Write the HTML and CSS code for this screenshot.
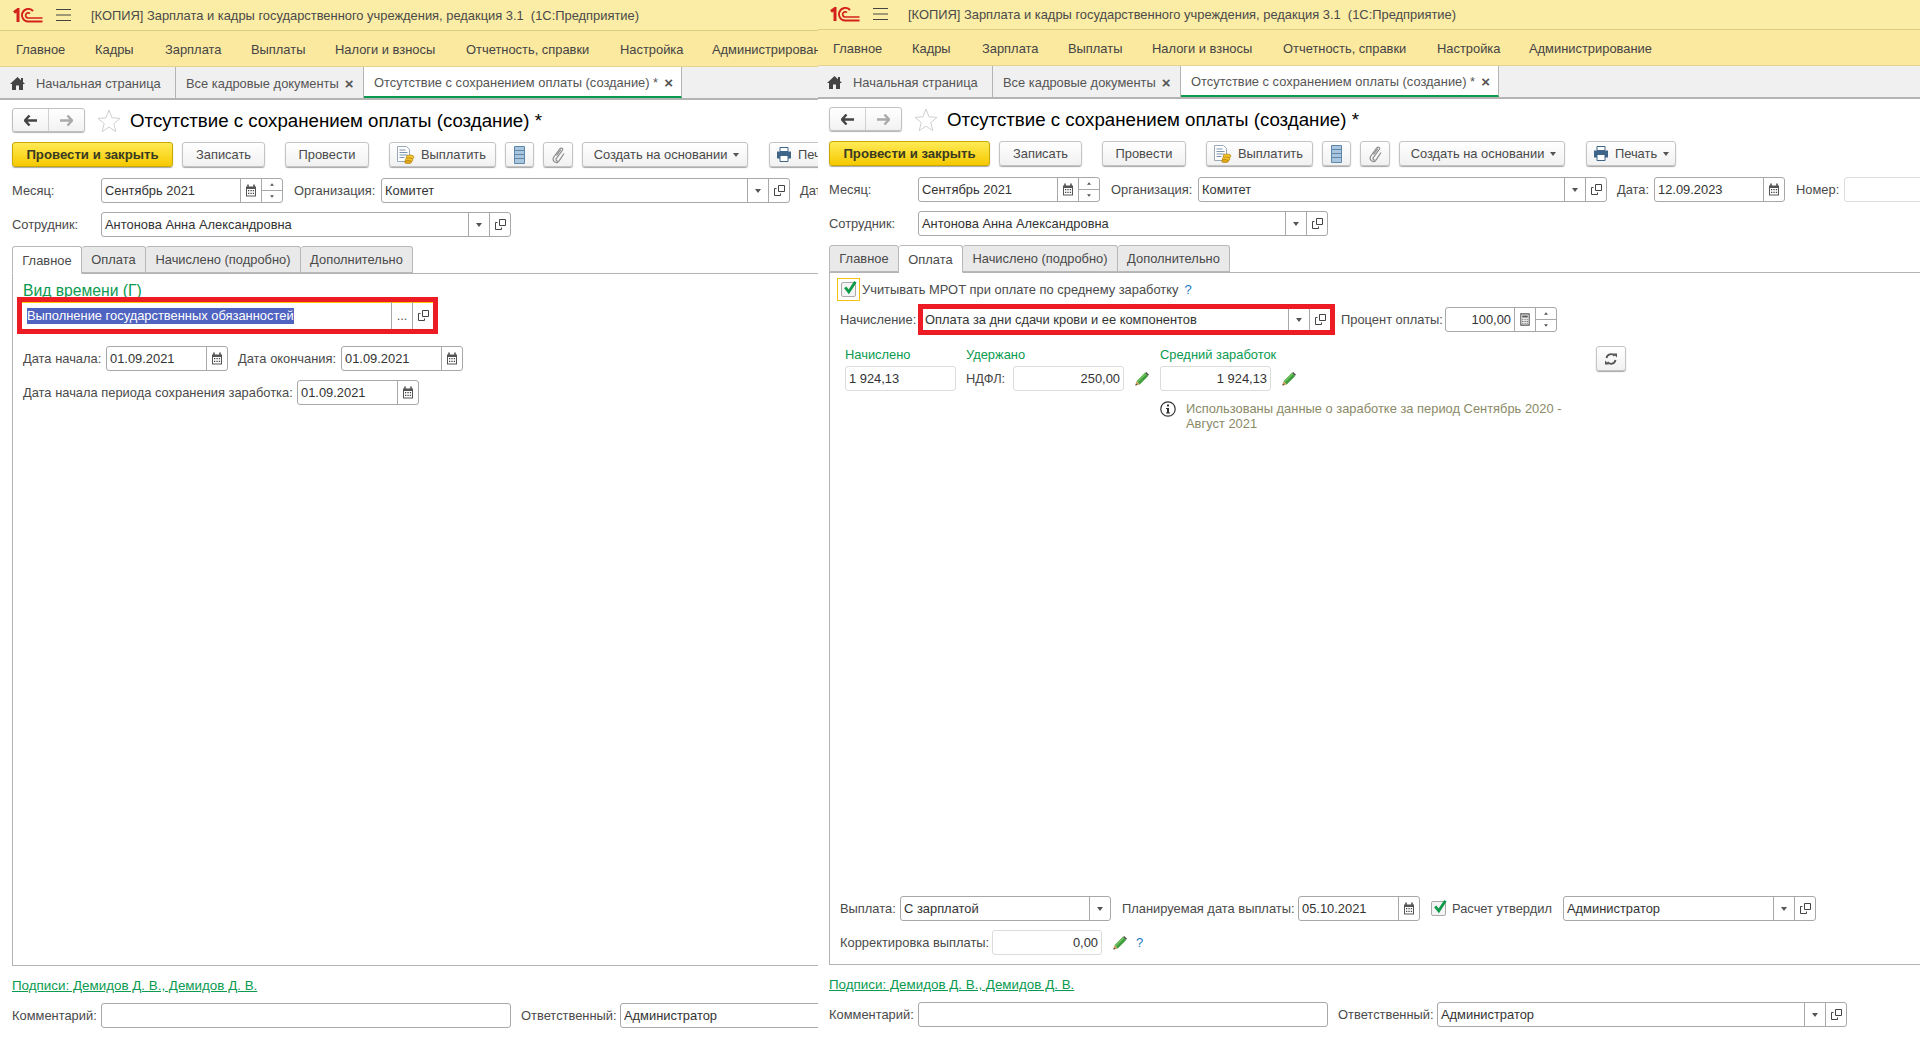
FILE: index.html
```html
<!DOCTYPE html>
<html lang="ru">
<head>
    <meta charset="UTF-8">
    <title>Отсутствие с сохранением оплаты</title>
    <link rel="stylesheet" href="styles.css">
</head>
<body>
    <svg class="defs" width="0" height="0">
        <symbol id="i-cal" viewBox="0 0 12 13"><path d="M1 2.5h10v10H1z" fill="#555"/><path d="M3 0.5v3M9 0.5v3" stroke="#555" stroke-width="1.6"/><path d="M2 5h8v6.5H2z" fill="#fff"/><path d="M3 6h1.3v1.2H3zM5.4 6h1.3v1.2H5.4zM7.8 6h1.3v1.2H7.8zM3 8.8h1.3V10H3zM5.4 8.8h1.3V10H5.4zM7.8 8.8h1.3V10H7.8z" fill="#444"/></symbol>
        <symbol id="i-calc" viewBox="0 0 12 14"><path d="M1.5 1h9v12h-9z" fill="none" stroke="#555" stroke-width="1.2"/><path d="M3 2.6h6v2.2H3zM3 6.2h1.3v1.2H3zM5.4 6.2h1.3v1.2H5.4zM7.7 6.2H9v1.2H7.7zM3 8.4h1.3v1.2H3zM5.4 8.4h1.3v1.2H5.4zM7.7 8.4H9v1.2H7.7zM3 10.5h1.3v1.2H3zM5.4 10.5h1.3v1.2H5.4zM7.7 10.5H9v1.2H7.7z" fill="#555"/></symbol>
        <symbol id="i-open" viewBox="0 0 11 11"><path d="M4.5 0.5h6v6h-6z" fill="none" stroke="#444"/><path d="M2.5 3.5h-2v7h6v-2" fill="none" stroke="#444"/></symbol>
        <symbol id="i-drop" viewBox="0 0 6 4"><path d="M0 0h6L3 4z" fill="#555"/></symbol>
        <symbol id="i-pencil" viewBox="0 0 14 14"><path d="M10 0.8l3.2 3.2-8.4 8.4-3.2-3.2z" fill="#3f9d3f"/><path d="M10 0.8l1.4 1.4-8.4 8.4-1.4-1.4z" fill="#6cc05c"/><path d="M11.2 0l2.8 2.8-1 1-2.8-2.8z" fill="#4a4a4a"/><path d="M1.6 9.2l3.2 3.2L0.4 13.6z" fill="#c99a55"/><path d="M0.9 11.6l1.5 1.5-2 .5z" fill="#444"/></symbol>
        <symbol id="i-check" viewBox="0 0 15 15"><path d="M3.2 6.4l3.6 4.4L13.4 0.8" fill="none" stroke="#0f9a4a" stroke-width="2.8"/></symbol>
        <symbol id="i-logo" viewBox="0 0 30 15"><path d="M1 4.500L5 1.500V14" fill="none" stroke="#d3211c" stroke-width="3"/><path d="M20 3A6.300 6.300 0 1 0 15 13.500H29.500" fill="none" stroke="#d3211c" stroke-width="1.900"/><path d="M17 5.500A2.600 2.600 0 1 0 15 10H29.500" fill="none" stroke="#d3211c" stroke-width="1.700"/></symbol>
    </svg>

    <div class="win win-left">
        <div class="win-inner">
            <div class="title-bar">
                <svg class="logo" width="30" height="15" viewBox="0 0 30 15"><use href="#i-logo"/></svg>
                <svg class="burger" width="15" height="12" viewBox="0 0 15 12"><path d="M0 0.5h15M0 6h15M0 11.5h15" stroke="#444"/></svg>
                <span class="title-text">[КОПИЯ] Зарплата и кадры государственного учреждения, редакция 3.1&nbsp; (1С:Предприятие)</span>
            </div>
            <div class="menu">
                <a class="m1">Главное</a><a class="m2">Кадры</a><a class="m3">Зарплата</a><a class="m4">Выплаты</a><a class="m5">Налоги и взносы</a><a class="m6">Отчетность, справки</a><a class="m7">Настройка</a><a>Администрирование</a>
            </div>
            <div class="open-tabs">
                <div class="otab otab-home"><svg width="15" height="13" viewBox="0 0 15 13"><path d="M7.5 0L0 7h2v6h4V8.5h3V13h4V7h2l-2-1.9V1h-2v2.2z" fill="#444"/></svg>Начальная страница</div>
                <div class="otab otab-all">Все кадровые документы<span class="x">×</span></div>
                <div class="otab otab-cur">Отсутствие с сохранением оплаты (создание) *<span class="x">×</span></div>
            </div>
            <div class="form">
                <div class="head">
                    <div class="nav"><span class="nav-b"><svg width="13" height="11" viewBox="0 0 13 11"><path d="M5.5 0.5L1 5.5l4.5 5M1.5 5.5H13" fill="none" stroke="#444" stroke-width="2.4"/></svg></span><span class="nav-b"><svg width="13" height="11" viewBox="0 0 13 11"><path d="M7.5 0.5L12 5.5l-4.5 5M11.5 5.5H0" fill="none" stroke="#aaa" stroke-width="2.4"/></svg></span></div>
                    <svg class="star" width="24" height="23" viewBox="0 0 24 23"><path d="M12 1l3 7.8 8 .6-6.2 5.2 2 8-6.8-4.4-6.8 4.4 2-8L1 9.400l8-.6z" fill="#fff" stroke="#cfcfcf"/></svg>
                    <h1>Отсутствие с сохранением оплаты (создание) *</h1>
                </div>
                <div class="toolbar">
                    <button class="btn btn-main">Провести и закрыть</button>
                    <button class="btn b-save">Записать</button>
                    <button class="btn b-post">Провести</button>
                    <button class="btn b-pay"><svg width="19" height="18" viewBox="0 0 19 18"><path d="M1.500 0.500h9l3 3v12h-12z" fill="#fff" stroke="#9aa8b8"/><path d="M3.500 4h6M3.500 6.500h8M3.500 9h8M3.500 11.500h5" stroke="#7d93ad"/><ellipse cx="14" cy="11" rx="4" ry="2" fill="#f3c22c" stroke="#a8780c" stroke-width=".6"/><ellipse cx="13" cy="14" rx="4" ry="2" fill="#f3c22c" stroke="#a8780c" stroke-width=".6"/><ellipse cx="12" cy="16" rx="3.500" ry="1.600" fill="#e0a818" stroke="#a8780c" stroke-width=".6"/></svg>Выплатить</button>
                    <button class="btn b-list"><svg width="11" height="18" viewBox="0 0 11 18"><path d="M0.500 0.500h10v17h-10z" fill="#a9c6de" stroke="#5d88ab"/><path d="M1 4.500h9M1 8.500h9M1 12.500h9" stroke="#5d88ab"/></svg></button>
                    <button class="btn b-clip"><svg width="14" height="18" viewBox="0 0 14 18"><path d="M12 3.500L5 13a2 2 0 0 0 3 2l5-7.500M9 2.500l-6.500 9a3.500 3.500 0 0 0 5 4.500M9 2.500a2 2 0 0 1 3 1M5.500 9.500L10 3.500" fill="none" stroke="#8a8a8a" stroke-width="1.200"/></svg></button>
                    <button class="btn b-base">Создать на основании<svg class="dr" width="6" height="4"><use href="#i-drop"/></svg></button>
                    <button class="btn b-print"><svg width="16" height="15" viewBox="0 0 16 15"><path d="M4 0.500h8v4H4z" fill="#fff" stroke="#3e6588"/><path d="M1 4.500h14v7H1z" fill="#3e6588"/><path d="M4 8.500h8v6H4z" fill="#fff" stroke="#3e6588"/></svg>Печать<svg class="dr" width="6" height="4"><use href="#i-drop"/></svg></button>
                </div>
                <div class="row row-top">
                    <span class="lbl l-main">Месяц:</span>
                    <div class="field f-month"><span class="val">Сентябрь 2021</span><span class="fb"><svg class="i12" viewBox="0 0 12 13"><use href="#i-cal"/></svg></span><span class="fb spin"><i><svg width="4" height="3"><use href="#i-drop"/></svg></i><i><svg width="4" height="3"><use href="#i-drop"/></svg></i></span></div>
                    <span class="lbl l-org">Организация:</span>
                    <div class="field f-org"><span class="val">Комитет</span><span class="fb"><svg width="6" height="4"><use href="#i-drop"/></svg></span><span class="fb"><svg class="i11" viewBox="0 0 11 11"><use href="#i-open"/></svg></span></div>
                    <span class="lbl l-date">Дата:</span>
                </div>
                <div class="row row-top2">
                    <span class="lbl l-main">Сотрудник:</span>
                    <div class="field f-emp"><span class="val">Антонова Анна Александровна</span><span class="fb"><svg width="6" height="4"><use href="#i-drop"/></svg></span><span class="fb"><svg class="i11" viewBox="0 0 11 11"><use href="#i-open"/></svg></span></div>
                </div>
                <div class="page-tabs">
                    <span class="ptab pt1 active">Главное</span><span class="ptab pt2">Оплата</span><span class="ptab pt3">Начислено (подробно)</span><span class="ptab pt4">Дополнительно</span>
                </div>
                <div class="panel">
                    <div class="kind-title">Вид времени (Г)</div>
                    <div class="red-frame frame-kind">
                        <div class="frame-val"><span class="sel">Выполнение государственных обязанностей</span></div>
                        <span class="fb fb-frame">...</span>
                        <span class="fb fb-frame"><svg class="i11" viewBox="0 0 11 11"><use href="#i-open"/></svg></span>
                    </div>
                    <div class="row row-in row-d1">
                        <span class="lbl l-ds">Дата начала:</span>
                        <div class="field f-d"><span class="val">01.09.2021</span><span class="fb"><svg class="i12" viewBox="0 0 12 13"><use href="#i-cal"/></svg></span></div>
                        <span class="lbl l-de">Дата окончания:</span>
                        <div class="field f-d"><span class="val">01.09.2021</span><span class="fb"><svg class="i12" viewBox="0 0 12 13"><use href="#i-cal"/></svg></span></div>
                    </div>
                    <div class="row row-in row-d2">
                        <span class="lbl l-dp">Дата начала периода сохранения заработка:</span>
                        <div class="field f-d"><span class="val">01.09.2021</span><span class="fb"><svg class="i12" viewBox="0 0 12 13"><use href="#i-cal"/></svg></span></div>
                    </div>
                </div>
                <div class="foot">
                    <a class="signs">Подписи: Демидов Д. В., Демидов Д. В.</a>
                    <div class="row">
                        <span class="lbl l-main">Комментарий:</span>
                        <div class="field f-emp"></div>
                        <span class="lbl l-resp">Ответственный:</span>
                        <div class="field f-resp"><span class="val">Администратор</span><span class="fb"><svg width="6" height="4"><use href="#i-drop"/></svg></span><span class="fb"><svg class="i11" viewBox="0 0 11 11"><use href="#i-open"/></svg></span></div>
                    </div>
                </div>
            </div>
        </div>
    </div>

    <div class="win win-right">
        <div class="win-inner">
            <div class="title-bar">
                <svg class="logo" width="30" height="15" viewBox="0 0 30 15"><use href="#i-logo"/></svg>
                <svg class="burger" width="15" height="12" viewBox="0 0 15 12"><path d="M0 0.5h15M0 6h15M0 11.5h15" stroke="#444"/></svg>
                <span class="title-text">[КОПИЯ] Зарплата и кадры государственного учреждения, редакция 3.1&nbsp; (1С:Предприятие)</span>
            </div>
            <div class="menu">
                <a class="m1">Главное</a><a class="m2">Кадры</a><a class="m3">Зарплата</a><a class="m4">Выплаты</a><a class="m5">Налоги и взносы</a><a class="m6">Отчетность, справки</a><a class="m7">Настройка</a><a>Администрирование</a>
            </div>
            <div class="open-tabs">
                <div class="otab otab-home"><svg width="15" height="13" viewBox="0 0 15 13"><path d="M7.5 0L0 7h2v6h4V8.5h3V13h4V7h2l-2-1.9V1h-2v2.2z" fill="#444"/></svg>Начальная страница</div>
                <div class="otab otab-all">Все кадровые документы<span class="x">×</span></div>
                <div class="otab otab-cur">Отсутствие с сохранением оплаты (создание) *<span class="x">×</span></div>
            </div>
            <div class="form">
                <div class="head">
                    <div class="nav"><span class="nav-b"><svg width="13" height="11" viewBox="0 0 13 11"><path d="M5.5 0.5L1 5.5l4.5 5M1.5 5.5H13" fill="none" stroke="#444" stroke-width="2.4"/></svg></span><span class="nav-b"><svg width="13" height="11" viewBox="0 0 13 11"><path d="M7.5 0.5L12 5.5l-4.5 5M11.5 5.5H0" fill="none" stroke="#aaa" stroke-width="2.4"/></svg></span></div>
                    <svg class="star" width="24" height="23" viewBox="0 0 24 23"><path d="M12 1l3 7.8 8 .6-6.2 5.2 2 8-6.8-4.4-6.8 4.4 2-8L1 9.400l8-.6z" fill="#fff" stroke="#cfcfcf"/></svg>
                    <h1>Отсутствие с сохранением оплаты (создание) *</h1>
                </div>
                <div class="toolbar">
                    <button class="btn btn-main">Провести и закрыть</button>
                    <button class="btn b-save">Записать</button>
                    <button class="btn b-post">Провести</button>
                    <button class="btn b-pay"><svg width="19" height="18" viewBox="0 0 19 18"><path d="M1.500 0.500h9l3 3v12h-12z" fill="#fff" stroke="#9aa8b8"/><path d="M3.500 4h6M3.500 6.500h8M3.500 9h8M3.500 11.500h5" stroke="#7d93ad"/><ellipse cx="14" cy="11" rx="4" ry="2" fill="#f3c22c" stroke="#a8780c" stroke-width=".6"/><ellipse cx="13" cy="14" rx="4" ry="2" fill="#f3c22c" stroke="#a8780c" stroke-width=".6"/><ellipse cx="12" cy="16" rx="3.500" ry="1.600" fill="#e0a818" stroke="#a8780c" stroke-width=".6"/></svg>Выплатить</button>
                    <button class="btn b-list"><svg width="11" height="18" viewBox="0 0 11 18"><path d="M0.500 0.500h10v17h-10z" fill="#a9c6de" stroke="#5d88ab"/><path d="M1 4.500h9M1 8.500h9M1 12.500h9" stroke="#5d88ab"/></svg></button>
                    <button class="btn b-clip"><svg width="14" height="18" viewBox="0 0 14 18"><path d="M12 3.500L5 13a2 2 0 0 0 3 2l5-7.500M9 2.500l-6.500 9a3.500 3.500 0 0 0 5 4.500M9 2.500a2 2 0 0 1 3 1M5.500 9.500L10 3.500" fill="none" stroke="#8a8a8a" stroke-width="1.200"/></svg></button>
                    <button class="btn b-base">Создать на основании<svg class="dr" width="6" height="4"><use href="#i-drop"/></svg></button>
                    <button class="btn b-print"><svg width="16" height="15" viewBox="0 0 16 15"><path d="M4 0.500h8v4H4z" fill="#fff" stroke="#3e6588"/><path d="M1 4.500h14v7H1z" fill="#3e6588"/><path d="M4 8.500h8v6H4z" fill="#fff" stroke="#3e6588"/></svg>Печать<svg class="dr" width="6" height="4"><use href="#i-drop"/></svg></button>
                </div>
                <div class="row row-top">
                    <span class="lbl l-main">Месяц:</span>
                    <div class="field f-month"><span class="val">Сентябрь 2021</span><span class="fb"><svg class="i12" viewBox="0 0 12 13"><use href="#i-cal"/></svg></span><span class="fb spin"><i><svg width="4" height="3"><use href="#i-drop"/></svg></i><i><svg width="4" height="3"><use href="#i-drop"/></svg></i></span></div>
                    <span class="lbl l-org">Организация:</span>
                    <div class="field f-org"><span class="val">Комитет</span><span class="fb"><svg width="6" height="4"><use href="#i-drop"/></svg></span><span class="fb"><svg class="i11" viewBox="0 0 11 11"><use href="#i-open"/></svg></span></div>
                    <span class="lbl l-date">Дата:</span>
                    <div class="field f-date"><span class="val">12.09.2023</span><span class="fb"><svg class="i12" viewBox="0 0 12 13"><use href="#i-cal"/></svg></span></div>
                    <span class="lbl l-num">Номер:</span>
                    <div class="field field-ro f-num"></div>
                </div>
                <div class="row row-top2">
                    <span class="lbl l-main">Сотрудник:</span>
                    <div class="field f-emp"><span class="val">Антонова Анна Александровна</span><span class="fb"><svg width="6" height="4"><use href="#i-drop"/></svg></span><span class="fb"><svg class="i11" viewBox="0 0 11 11"><use href="#i-open"/></svg></span></div>
                </div>
                <div class="page-tabs">
                    <span class="ptab pt1">Главное</span><span class="ptab pt2 active">Оплата</span><span class="ptab pt3">Начислено (подробно)</span><span class="ptab pt4">Дополнительно</span>
                </div>
                <div class="panel panel-pay">
                    <div class="pay-top">
                        <div class="check-row">
                            <span class="focus-box"><span class="check"><svg width="15" height="15" viewBox="0 0 15 15"><use href="#i-check"/></svg></span></span>
                            <span class="lbl">Учитывать МРОТ при оплате по среднему заработку</span>
                            <span class="hint hint-mrot">?</span>
                        </div>
                        <div class="row row-accr">
                            <span class="lbl l-accr">Начисление:</span>
                            <div class="red-frame frame-accr">
                                <div class="frame-val">Оплата за дни сдачи крови и ее компонентов</div>
                                <span class="fb fb-frame"><svg width="6" height="4"><use href="#i-drop"/></svg></span>
                                <span class="fb fb-frame"><svg class="i11" viewBox="0 0 11 11"><use href="#i-open"/></svg></span>
                            </div>
                            <span class="lbl l-pct">Процент оплаты:</span>
                            <div class="field f-pct"><span class="val num">100,00</span><span class="fb"><svg class="i12" viewBox="0 0 12 14"><use href="#i-calc"/></svg></span><span class="fb spin"><i><svg width="4" height="3"><use href="#i-drop"/></svg></i><i><svg width="4" height="3"><use href="#i-drop"/></svg></i></span></div>
                        </div>
                        <div class="amounts">
                            <div class="amt amt-acc">
                                <div class="amt-head">Начислено</div>
                                <div class="field field-ro f-amt"><span class="val">1 924,13</span></div>
                            </div>
                            <div class="amt amt-held">
                                <div class="amt-head">Удержано</div>
                                <div class="amt-line">
                                    <span class="lbl l-ndfl">НДФЛ:</span>
                                    <div class="field field-ro f-amt"><span class="val num">250,00</span></div>
                                    <svg class="pencil" width="14" height="14" viewBox="0 0 14 14"><use href="#i-pencil"/></svg>
                                </div>
                            </div>
                            <div class="amt amt-avg">
                                <div class="amt-head">Средний заработок</div>
                                <div class="amt-line">
                                    <div class="field field-ro f-amt"><span class="val num">1 924,13</span></div>
                                    <svg class="pencil" width="14" height="14" viewBox="0 0 14 14"><use href="#i-pencil"/></svg>
                                </div>
                                <div class="note">
                                    <svg width="16" height="16" viewBox="0 0 16 16"><circle cx="8" cy="8" r="7.200" fill="#fff" stroke="#333" stroke-width="1.200"/><path d="M7 3.500h2v2H7zM6 7h3v4.500h1V12.500H6v-1h1V8H6z" fill="#333"/></svg>
                                    <span>Использованы данные о заработке за период Сентябрь 2020 -<br>Август 2021</span>
                                </div>
                            </div>
                            <button class="btn b-refresh"><svg width="12" height="12" viewBox="0 0 12 12"><path d="M1.500 5A4.500 4.500 0 0 1 9.500 3M10.500 7A4.500 4.500 0 0 1 2.500 9" fill="none" stroke="#555" stroke-width="1.800"/><path d="M8 0.500L12 0.500V4.500zM4 11.500H0V7.500z" fill="#555"/></svg></button>
                        </div>
                    </div>
                    <div class="pay-bottom">
                        <div class="row">
                            <span class="lbl l-payt">Выплата:</span>
                            <div class="field f-payt"><span class="val">С зарплатой</span><span class="fb"><svg width="6" height="4"><use href="#i-drop"/></svg></span></div>
                            <span class="lbl l-plan">Планируемая дата выплаты:</span>
                            <div class="field f-plan"><span class="val">05.10.2021</span><span class="fb"><svg class="i12" viewBox="0 0 12 13"><use href="#i-cal"/></svg></span></div>
                            <span class="check check-ok"><svg width="15" height="15" viewBox="0 0 15 15"><use href="#i-check"/></svg></span>
                            <span class="lbl l-appr">Расчет утвердил</span>
                            <div class="field f-appr"><span class="val">Администратор</span><span class="fb"><svg width="6" height="4"><use href="#i-drop"/></svg></span><span class="fb"><svg class="i11" viewBox="0 0 11 11"><use href="#i-open"/></svg></span></div>
                        </div>
                        <div class="row">
                            <span class="lbl l-corr">Корректировка выплаты:</span>
                            <div class="field field-ro f-corr"><span class="val num">0,00</span></div>
                            <svg class="pencil" width="14" height="14" viewBox="0 0 14 14"><use href="#i-pencil"/></svg>
                            <span class="hint hint-corr">?</span>
                        </div>
                    </div>
                </div>
                <div class="foot">
                    <a class="signs">Подписи: Демидов Д. В., Демидов Д. В.</a>
                    <div class="row">
                        <span class="lbl l-main">Комментарий:</span>
                        <div class="field f-emp"></div>
                        <span class="lbl l-resp">Ответственный:</span>
                        <div class="field f-resp"><span class="val">Администратор</span><span class="fb"><svg width="6" height="4"><use href="#i-drop"/></svg></span><span class="fb"><svg class="i11" viewBox="0 0 11 11"><use href="#i-open"/></svg></span></div>
                    </div>
                </div>
            </div>
        </div>
    </div>
</body>
</html>
```
FILE: styles.css
```css
* {
    box-sizing: border-box;
}
body {
    margin: 0;
    height: 1040px;
    overflow: hidden;
    display: flex;
    background: #fff;
    font-family: "Liberation Sans", Arial, sans-serif;
    font-size: 12.9px;
    color: #4a4a4a;
}
.defs {
    position: absolute;
}

/* windows */
.win {
    height: 1040px;
    overflow: hidden;
}
.win-left {
    width: 818px;
    flex: none;
}
.win-right {
    flex: 1;
    margin-top: -1px;
}
.win-inner {
    width: 1110px;
    height: 100%;
    display: flex;
    flex-direction: column;
}
.win-right .win-inner {
    margin-left: -1px;
}

/* header bars */
.title-bar {
    height: 31px;
    flex: none;
    display: flex;
    align-items: center;
    background: #fbeda5;
    border-bottom: 1px solid #dccd85;
    color: #4a4a4a;
}
.logo {
    margin-left: 13px;
}
.burger {
    margin-left: 13px;
}
.title-text {
    margin-left: 20px;
    padding-top: 1px;
    white-space: nowrap;
}
.menu {
    height: 36px;
    flex: none;
    display: flex;
    align-items: center;
    padding-left: 16px;
    padding-top: 1px;
    background: #fbe9a0;
    border-bottom: 1px solid #e3d58f;
    white-space: nowrap;
    color: #444;
}
.menu a { flex: none; }
.m1 { width: 79px; }
.m2 { width: 70px; }
.m3 { width: 86px; }
.m4 { width: 84px; }
.m5 { width: 131px; }
.m6 { width: 154px; }
.m7 { width: 92px; }

.open-tabs {
    height: 33px;
    flex: none;
    display: flex;
    background: #f0f0f0;
    border-bottom: 2px solid #b4b4b4;
    white-space: nowrap;
    color: #555;
}
.otab {
    display: flex;
    align-items: center;
    flex: none;
    height: 31px;
    padding-top: 2px;
    border-right: 1px solid #b4b4b4;
}
.otab-home {
    width: 176px;
    padding-left: 10px;
}
.otab-home svg {
    margin-right: 11px;
}
.otab-all {
    width: 188px;
    padding-left: 10px;
}
.otab-cur {
    width: 318px;
    padding-left: 10px;
    background: #fff;
    border-bottom: 2px solid #0a9a50;
    background-clip: padding-box;
}
.x {
    margin-left: 6px;
    font-size: 15px;
    line-height: 12px;
    font-weight: bold;
    color: #555;
}

/* form */
.form {
    flex: 1;
    display: flex;
    flex-direction: column;
    min-height: 0;
}
.head {
    display: flex;
    align-items: center;
    height: 24px;
    margin-top: 8px;
    padding-left: 12px;
    flex: none;
}
.nav {
    display: flex;
    width: 73px;
    height: 24px;
    border: 1px solid #c0c0c0;
    border-radius: 3px;
    box-shadow: 0 1px 1px rgba(0, 0, 0, 0.3);
    background: linear-gradient(#fff, #f2f2f2);
}
.nav-b {
    flex: 1;
    display: flex;
    align-items: center;
    justify-content: center;
}
.nav-b + .nav-b {
    border-left: 1px solid #d0d0d0;
}
.star {
    margin-left: 12px;
}
h1 {
    margin: 0 0 0 9px;
    padding-top: 1px;
    font-size: 18.7px;
    font-weight: normal;
    color: #000;
    white-space: nowrap;
}

.toolbar {
    display: flex;
    height: 26px;
    margin-top: 10px;
    padding-left: 12px;
    flex: none;
}
.btn {
    height: 25px;
    flex: none;
    padding: 0;
    display: flex;
    align-items: center;
    justify-content: center;
    font: inherit;
    color: #4a4a4a;
    border: 1px solid #c4c4c4;
    border-radius: 3px;
    background: linear-gradient(#fff, #f1f1f1);
    box-shadow: 0 1px 1px rgba(0, 0, 0, 0.35);
    white-space: nowrap;
}
.btn-main {
    width: 161px;
    font-size: 13.2px;
    font-weight: bold;
    color: #3a3a20;
    border-color: #c9a800;
    background: linear-gradient(#ffeb55, #f6c900);
}
.b-save { width: 83px; margin-left: 9px; }
.b-post { width: 84px; margin-left: 20px; }
.b-pay { width: 107px; margin-left: 20px; padding-right: 3px; }
.b-pay svg { margin-right: 6px; }
.b-list { width: 29px; margin-left: 9px; }
.b-clip { width: 30px; margin-left: 9px; }
.b-base { width: 166px; margin-left: 9px; padding-left: 3px; }
.b-print { width: 90px; margin-left: 21px; }
.b-print svg:first-child { margin-right: 6px; }
.dr { margin-left: 6px; }

/* field rows */
.row {
    display: flex;
    align-items: center;
    height: 25px;
    flex: none;
}
.row-top {
    margin-top: 10px;
    padding-left: 12px;
}
.row-top2 {
    margin-top: 9px;
    padding-left: 12px;
}
.lbl {
    flex: none;
    white-space: nowrap;
}
.l-main { width: 89px; }
.l-org { width: 87px; margin-left: 11px; }
.l-date { width: 37px; margin-left: 10px; }
.l-num { width: 48px; margin-left: 11px; }
.l-resp { width: 99px; margin-left: 10px; }

.field {
    display: flex;
    height: 25px;
    flex: none;
    border: 1px solid #a8a8a8;
    border-radius: 3px;
    background: #fff;
    color: #333;
}
.field-ro {
    border-color: #dcdcdc;
}
.val {
    flex: 1;
    min-width: 0;
    padding: 0 3px;
    line-height: 23px;
    white-space: nowrap;
    overflow: hidden;
}
.num { text-align: right; }
.fb {
    flex: none;
    width: 21px;
    display: flex;
    align-items: center;
    justify-content: center;
    border-left: 1px solid #a8a8a8;
}
.spin {
    flex-direction: column;
}
.spin i {
    flex: 1;
    width: 100%;
    display: flex;
    align-items: center;
    justify-content: center;
}
.spin i:first-child {
    border-bottom: 1px solid #a8a8a8;
}
.spin i:first-child svg {
    transform: rotate(180deg);
}
.i12 { width: 12px; height: 13px; }
.i11 { width: 11px; height: 11px; }

.f-month { width: 182px; }
.f-org { width: 409px; }
.f-date { width: 131px; }
.f-num { width: 120px; }
.f-emp { width: 410px; }
.f-resp { width: 410px; }
.f-d { width: 122px; }

/* page tabs */
.page-tabs {
    display: flex;
    height: 27px;
    margin-top: 9px;
    margin-left: 12px;
    flex: none;
    position: relative;
}
.ptab {
    height: 27px;
    flex: none;
    display: flex;
    align-items: center;
    justify-content: center;
    border: 1px solid #b8b8b8;
    border-left: 0;
    border-radius: 3px 3px 0 0;
    background: #e9e9e9;
    color: #4a4a4a;
}
.ptab.pt1 { border-left: 1px solid #b8b8b8; }
.ptab.active {
    background: #fff;
    border-bottom-color: #fff;
    height: 28px;
    position: relative;
}
.pt1 { width: 70px; }
.pt2 { width: 64px; }
.pt3 { width: 155px; }
.pt4 { width: 112px; }

.panel {
    flex: 1;
    min-height: 0;
    margin-left: 12px;
    border: 1px solid #b4b4b4;
    border-width: 1px 0 1px 1px;
}
.kind-title {
    margin-left: 10px;
    height: 24px;
    line-height: 24px;
    margin-top: 5px;
    margin-bottom: -6px;
    font-size: 15.7px;
    color: #0a9a50;
}
.red-frame {
    position: relative;
    display: flex;
    border: 5px solid #ed1c24;
    background: #fff;
    color: #333;
}
.frame-val {
    flex: 1;
    min-width: 0;
    white-space: nowrap;
}
.fb-frame {
    width: 21px;
    color: #555;
}
.frame-kind {
    margin-left: 4px;
    width: 421px;
    height: 37px;
    box-shadow: inset 0 1px 0 #ffc800;
}
.frame-kind .frame-val {
    padding-left: 5px;
    line-height: 27px;
}
.sel {
    display: inline-block;
    line-height: 16px;
    background: #4f63c0;
    color: #fff;
}
.row-in { padding-left: 10px; }
.row-d1 { margin-top: 12px; }
.row-d2 { margin-top: 9px; }
.l-ds { width: 83px; }
.l-de { width: 103px; margin-left: 10px; }
.l-dp { width: 274px; }

/* pay panel */
.panel-pay {
    display: flex;
    flex-direction: column;
    justify-content: space-between;
    padding-left: 7px;
    padding-bottom: 9px;
}
.check-row {
    display: flex;
    align-items: center;
    height: 23px;
    margin-top: 5px;
}
.focus-box {
    width: 23px;
    height: 23px;
    display: flex;
    align-items: center;
    justify-content: center;
    border: 1px solid #f4c20d;
    margin-right: 2px;
}
.check {
    flex: none;
    width: 15px;
    height: 15px;
    border: 1px solid #aaa;
    border-radius: 2px;
    background: #f4f4f4;
    display: block;
}
.check svg {
    display: block;
    margin: -2px 0 0 0;
    overflow: visible;
}
.hint {
    font-size: 13px;
    color: #1a78c2;
}
.hint-mrot { margin-left: 6px; }
.row-accr {
    height: 31px;
    margin-top: 3px;
    padding-left: 3px;
}
.l-accr { width: 78px; }
.frame-accr {
    width: 417px;
    height: 31px;
}
.frame-accr .frame-val {
    padding-left: 2px;
    line-height: 21px;
}
.l-pct { width: 104px; margin-left: 6px; }
.f-pct { width: 112px; }
.amounts {
    display: flex;
    margin-top: 13px;
    padding-left: 8px;
}
.amt { flex: none; }
.amt-head {
    height: 18px;
    line-height: 14px;
    color: #0a9a50;
}
.amt-line {
    display: flex;
    align-items: center;
}
.f-amt { width: 111px; }
.amt-acc { width: 121px; }
.amt-held { width: 194px; }
.amt-avg { width: 436px; }
.l-ndfl { width: 47px; color: #4a4a4a; }
.pencil {
    flex: none;
    margin-left: 11px;
}
.note {
    display: flex;
    margin-top: 10px;
    color: #8a8a66;
    line-height: 15px;
    white-space: nowrap;
}
.note svg {
    flex: none;
    margin-right: 10px;
}
.b-refresh {
    width: 30px;
    margin-top: -2px;
    align-self: flex-start;
}
.pay-bottom {
    display: flex;
    flex-direction: column;
    gap: 9px;
    padding-left: 3px;
}
.l-payt { width: 60px; }
.f-payt { width: 211px; }
.l-plan { width: 176px; margin-left: 11px; }
.f-plan { width: 122px; }
.check-ok { margin-left: 11px; }
.l-appr { width: 111px; margin-left: 6px; }
.f-appr { width: 253px; }
.l-corr { width: 152px; }
.f-corr { width: 110px; }
.hint-corr { margin-left: 9px; }

/* footer */
.foot {
    height: 74px;
    flex: none;
    padding-left: 12px;
}
.signs {
    display: block;
    height: 37px;
    padding-top: 12px;
    font-size: 13.4px;
    color: #0a9a50;
    text-decoration: underline;
}
```
